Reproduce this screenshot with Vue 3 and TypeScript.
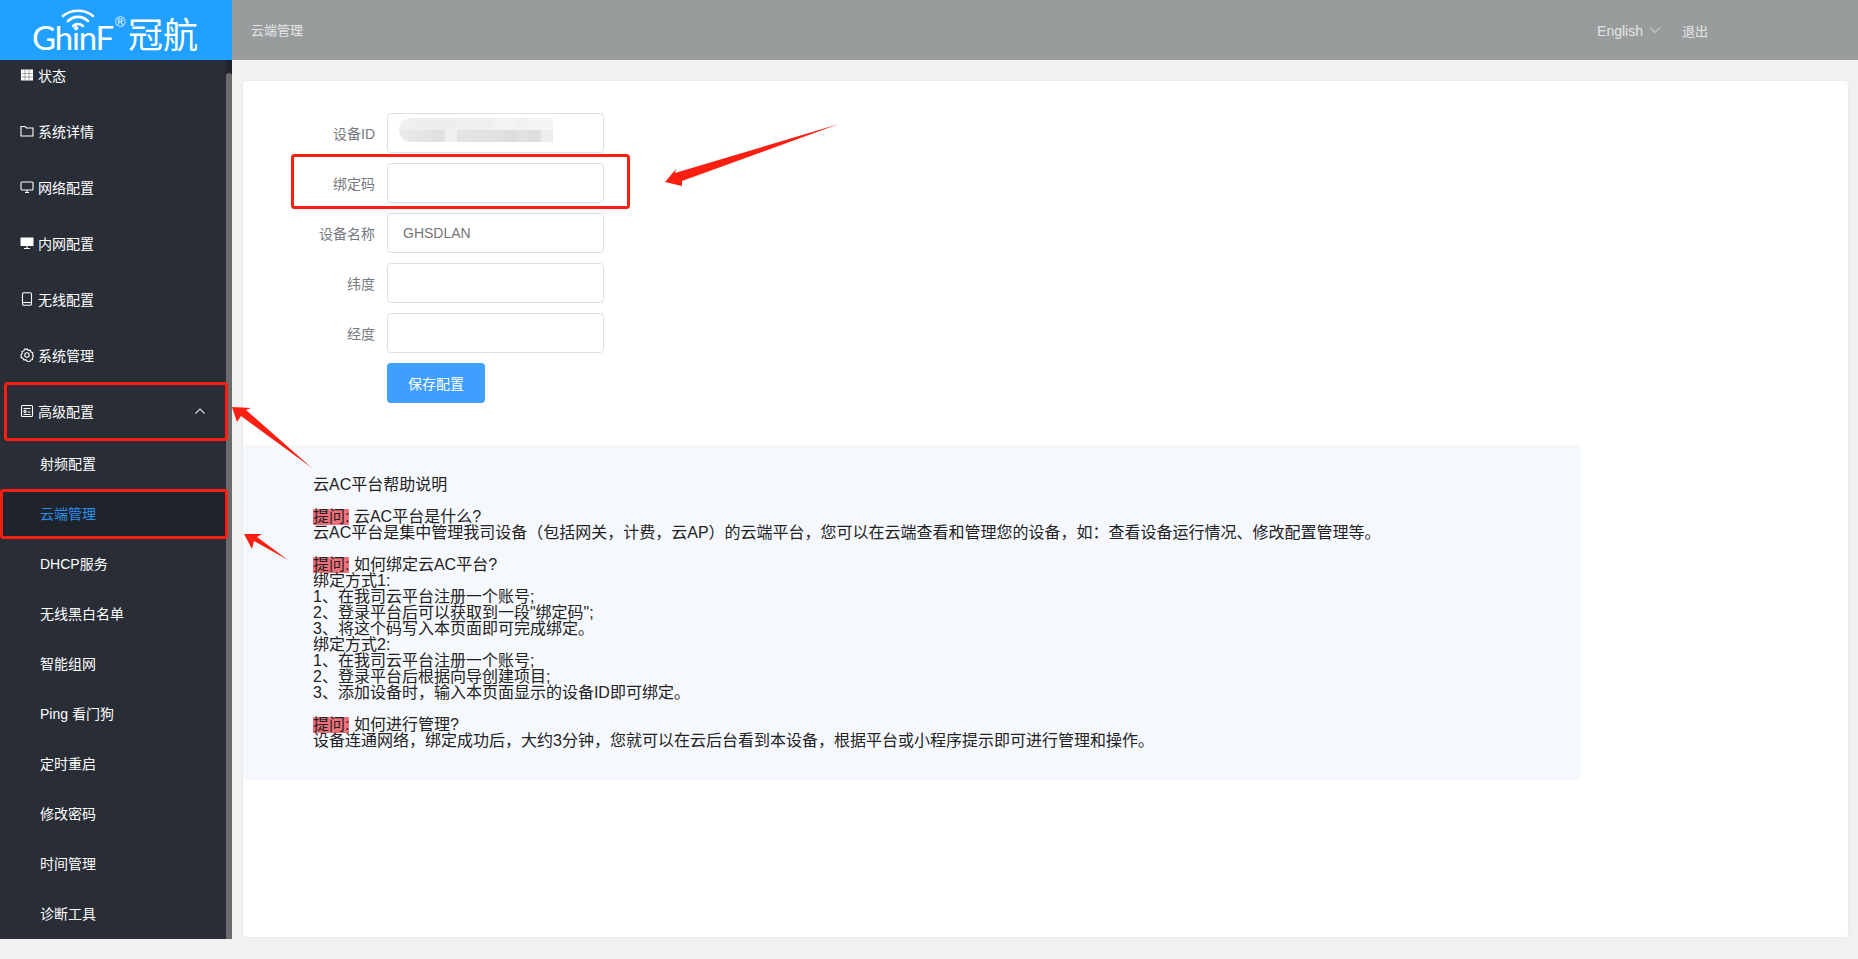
<script setup lang="ts">
import { ref } from 'vue'

const topItems = ref([
  { id: 'grid', text: '状态' },
  { id: 'folder', text: '系统详情' },
  { id: 'monitor', text: '网络配置' },
  { id: 'desktop', text: '内网配置' },
  { id: 'mobile', text: '无线配置' },
  { id: 'gear', text: '系统管理' }
])

const subItems = ref([
  { text: '射频配置', active: false },
  { text: '云端管理', active: true },
  { text: 'DHCP服务', active: false },
  { text: '无线黑白名单', active: false },
  { text: '智能组网', active: false },
  { text: 'Ping 看门狗', active: false },
  { text: '定时重启', active: false },
  { text: '修改密码', active: false },
  { text: '时间管理', active: false },
  { text: '诊断工具', active: false }
])

const fields = ref([
  { label: '设备ID', value: '', blurred: true },
  { label: '绑定码', value: '', blurred: false },
  { label: '设备名称', value: 'GHSDLAN', blurred: false },
  { label: '纬度', value: '', blurred: false },
  { label: '经度', value: '', blurred: false }
])

// mosaic that hides the device id in the reference
const blurBlocks = [
  '#f1f1f1', '#eeeeee', '#eeeeee', '#eeeeee', '#eeeeee', '#efefef', '#efefef', '#efefef', '#f3f3f3', '#f2f3f3', '#f0f1f1', '#f5f5f5', '#f4f5f5',
  '#eaeaea', '#e6e6e6', '#e4e4e4', '#e0e0e0', '#f0f0f0', '#e3e3e3', '#e2e2e2', '#e2e2e2', '#e0e0e0', '#dddddd', '#e0e1e1', '#dcdddd', '#ebeded'
]
</script>

<template>
  <div class="page">
    <header class="topbar">
      <div class="logo">
        <svg class="wifi" width="34" height="19" viewBox="0 0 34 19" fill="none" stroke="#fff" stroke-width="2.600" stroke-linecap="round">
          <path d="M2 7C10 0 24 0 32 7" />
          <path d="M7 12C13 6.500 21 6.500 27 12" />
          <path d="M12 17C15 14.500 19 14.500 22 17" />
        </svg>
        <span class="reg">®</span>
        <span class="brand">GhinF</span>
        <span class="brand-cn">冠航</span>
      </div>
      <div class="crumb">云端管理</div>
      <div class="top-right">
        <span class="lang">English</span>
        <svg class="lang-arrow" width="12" height="8" viewBox="0 0 12 8" fill="none" stroke="#e2e4e4" stroke-width="1">
          <path d="M1 1.500L6 6.500L11 1.500" />
        </svg>
        <span class="logout">退出</span>
      </div>
    </header>

    <div class="body">
      <aside class="sidebar">
        <nav class="nav">
          <div v-for="item in topItems" :key="item.text" class="nav-item">
            <svg class="nav-icon" width="14" height="14" viewBox="0 0 14 14" fill="none" stroke="#fff" stroke-width="1.100">
              <template v-if="item.id === 'grid'">
                <path d="M1.500 2h11v10h-11z" fill="#fff" />
                <path d="M5 2v10M9 2v10M1.500 5.500h11M1.500 9h11" stroke="#7d8188" stroke-width=".7" />
              </template>
              <path v-else-if="item.id === 'folder'" d="M1 2.500h4l1.500 1.500h6.500v8h-12z" />
              <template v-else-if="item.id === 'monitor'">
                <rect x="1" y="2" width="12" height="8" rx="1" />
                <path d="M5 12.500h4M7 10v2.500" />
              </template>
              <template v-else-if="item.id === 'desktop'">
                <rect x=".5" y="1.500" width="13" height="8.500" fill="#fff" stroke="none" />
                <path d="M4 12.500h6M7 10v2.500" />
              </template>
              <template v-else-if="item.id === 'mobile'">
                <rect x="2.500" y=".8" width="9" height="12.400" rx="1.200" />
                <path d="M2.500 10.500h9" />
              </template>
              <template v-else>
                <circle cx="7" cy="7" r="2.200" />
                <path d="M7 .9l1.300 1.500 2-.3.7 1.900 1.900.8-.3 2.200 1 1.100-1.300 1.500.2 1.900-1.900.6-.8 1.800-1.900-.4L7 13.100l-1.300-1.400-1.900.3-.8-1.800-1.900-.6.2-2L.9 7l1.300-1.400-.3-2 1.900-.7.7-1.900 2 .3z" />
              </template>
            </svg>
            <span>{{ item.text }}</span>
          </div>
          <div class="nav-item">
            <svg class="nav-icon" width="14" height="14" viewBox="0 0 14 14" fill="none" stroke="#fff" stroke-width="1.100">
              <rect x="1.500" y="1.500" width="11" height="11" rx="1" />
              <path d="M3.500 4.500h7" />
              <circle cx="5" cy="7.500" r="1.100" />
              <path d="M3.500 10.500h7M7.500 8h3" />
            </svg>
            <span>高级配置</span>
            <svg class="nav-chevron" width="12" height="8" viewBox="0 0 12 8" fill="none" stroke="#d8dadd" stroke-width="1.100">
              <path d="M1.500 6.500L6 2L10.500 6.500" />
            </svg>
          </div>
          <div
            v-for="sub in subItems"
            :key="sub.text"
            class="sub-item"
            :class="{ active: sub.active }"
          >
            {{ sub.text }}
          </div>
        </nav>
        <div class="scroll-track">
          <div class="scroll-thumb"></div>
        </div>
      </aside>

      <main class="main">
        <section class="card">
          <form class="form" @submit.prevent>
            <div v-for="field in fields" :key="field.label" class="form-row">
              <label class="form-label">{{ field.label }}</label>
              <div class="input-box">
                <span v-if="field.value">{{ field.value }}</span>
                <span v-if="field.blurred" class="blur-id">
                  <i v-for="(color, i) in blurBlocks" :key="i" :style="{ background: color }"></i>
                </span>
              </div>
            </div>
            <div class="form-row">
              <span class="form-label"></span>
              <button class="save-btn">保存配置</button>
            </div>
          </form>

          <div class="help">
            <p>云AC平台帮助说明</p>
            <p><span class="tip">提问:</span> 云AC平台是什么?<br />云AC平台是集中管理我司设备（包括网关，计费，云AP）的云端平台，您可以在云端查看和管理您的设备，如：查看设备运行情况、修改配置管理等。</p>
            <p>
              <span class="tip">提问:</span> 如何绑定云AC平台?<br />
              绑定方式1:<br />
              1、在我司云平台注册一个账号;<br />
              2、登录平台后可以获取到一段"绑定码";<br />
              3、将这个码写入本页面即可完成绑定。<br />
              绑定方式2:<br />
              1、在我司云平台注册一个账号;<br />
              2、登录平台后根据向导创建项目;<br />
              3、添加设备时，输入本页面显示的设备ID即可绑定。
            </p>
            <p><span class="tip">提问:</span> 如何进行管理?<br />设备连通网络，绑定成功后，大约3分钟，您就可以在云后台看到本设备，根据平台或小程序提示即可进行管理和操作。</p>
          </div>
        </section>
      </main>
    </div>

    <svg class="marks" width="1858" height="959" viewBox="0 0 1858 959">
      <g fill="none" stroke="#fb1f12" stroke-width="3">
        <rect x="5.500" y="383.500" width="221" height="56" rx="2" />
        <rect x="1.500" y="490.500" width="225" height="47" rx="2" />
        <rect x="292.500" y="155.500" width="336" height="52" rx="2" />
      </g>
      <g fill="#fb1f12">
        <polygon points="665,182 676,169 675,173 839,124 682,181 682,186" />
        <polygon points="232,407 251,408 246,410 312,468 241,416 237,422" />
        <polygon points="244,534 262,534 257,537 288,560 254,541 252,549" />
      </g>
    </svg>
  </div>
</template>

<style scoped>
.page {
  position: relative;
  width: 1858px;
  height: 959px;
  overflow: hidden;
  background: #f1f1f1;
  font-family: "Liberation Sans", "Noto Sans CJK SC", sans-serif;
}

.topbar {
  display: flex;
  align-items: center;
  height: 60px;
  background: #999c9c;
  color: #e4e6e6;
}

.logo {
  position: relative;
  display: flex;
  align-items: flex-end;
  width: 232px;
  height: 60px;
  box-sizing: border-box;
  padding: 0 0 4px 32px;
  background: #20a0ff;
  color: #fff;
}

.wifi {
  position: absolute;
  left: 61px;
  top: 9px;
}

.reg {
  position: absolute;
  left: 115px;
  top: 15px;
  font-size: 14px;
  line-height: 14px;
}

.brand {
  font-family: Lato, "Liberation Sans", sans-serif;
  font-size: 33px;
  line-height: 38px;
  letter-spacing: -1.2px;
}

.brand-cn {
  margin-left: 15px;
  font-size: 35px;
  line-height: 40px;
}

.crumb {
  margin-left: 19px;
  margin-bottom: 2px;
  font-size: 13px;
}

.top-right {
  display: flex;
  align-items: center;
  margin-left: auto;
  margin-right: 150px;
}

.lang {
  margin-top: 2px;
  font-size: 14px;
}

.lang-arrow {
  margin-left: 6px;
}

.logout {
  margin-left: 21px;
  font-size: 13px;
}

.body {
  display: flex;
  height: 879px;
}

.sidebar {
  display: flex;
  flex: none;
  width: 232px;
  background: #282d36;
}

.nav {
  flex: 1;
  overflow: hidden;
  color: #fff;
  font-size: 14px;
}

.nav-item {
  display: flex;
  align-items: center;
  height: 56px;
  padding-left: 20px;
}

.nav-item:first-child {
  margin-top: -13px;
}

.nav-icon {
  flex: none;
  margin-right: 4px;
}

.nav-chevron {
  margin-left: auto;
  margin-right: 20px;
}

.sub-item {
  height: 50px;
  padding-left: 40px;
  line-height: 50px;
}

.sub-item.active {
  background: #1f232b;
  color: #2b8ff0;
}

.scroll-track {
  flex: none;
  width: 6px;
  padding-top: 13px;
  box-sizing: border-box;
  background: #20242b;
}

.scroll-thumb {
  height: 100%;
  background: #6b6b6b;
  border-radius: 3px 3px 0 0;
}

.main {
  flex: 1;
  padding: 21px 10px 2px 11px;
}

.card {
  height: 100%;
  box-sizing: border-box;
  padding-top: 32px;
  background: #fff;
  border-radius: 4px;
  box-shadow: 0 0 2px rgba(0, 0, 0, 0.08);
}

.form-row {
  display: flex;
  align-items: center;
  margin-bottom: 10px;
}

.form-label {
  width: 132px;
  margin-right: 12px;
  color: #777a80;
  font-size: 14px;
  text-align: right;
}

.input-box {
  position: relative;
  width: 217px;
  height: 40px;
  box-sizing: border-box;
  padding-left: 15px;
  border: 1px solid #dcdfe6;
  border-radius: 4px;
  color: #757575;
  font-size: 14px;
  line-height: 38px;
}

.blur-id {
  position: absolute;
  left: 11px;
  top: 4px;
  display: grid;
  grid-template-columns: 10px repeat(12, 12px);
  grid-auto-rows: 12px;
  overflow: hidden;
  border-radius: 12px 0 0 12px;
}

.blur-id i {
  display: block;
}

.save-btn {
  width: 98px;
  height: 40px;
  padding: 0;
  border: 0;
  border-radius: 4px;
  background: #409eff;
  color: #fff;
  font-family: inherit;
  font-size: 14px;
}

.help {
  width: 1338px;
  box-sizing: border-box;
  margin-top: 42px;
  padding: 32px 70px 31px;
  background: #f5f8fd;
  color: #222;
  font-size: 16px;
  line-height: 16px;
}

.help p {
  margin: 0 0 16px;
}

.help p:last-child {
  margin-bottom: 0;
}

.tip {
  display: inline-block;
  height: 16px;
  background: #f0707a;
}

.marks {
  position: absolute;
  left: 0;
  top: 0;
  pointer-events: none;
}
</style>

<style>
html,
body {
  margin: 0;
  background: #f1f1f1;
}
</style>
